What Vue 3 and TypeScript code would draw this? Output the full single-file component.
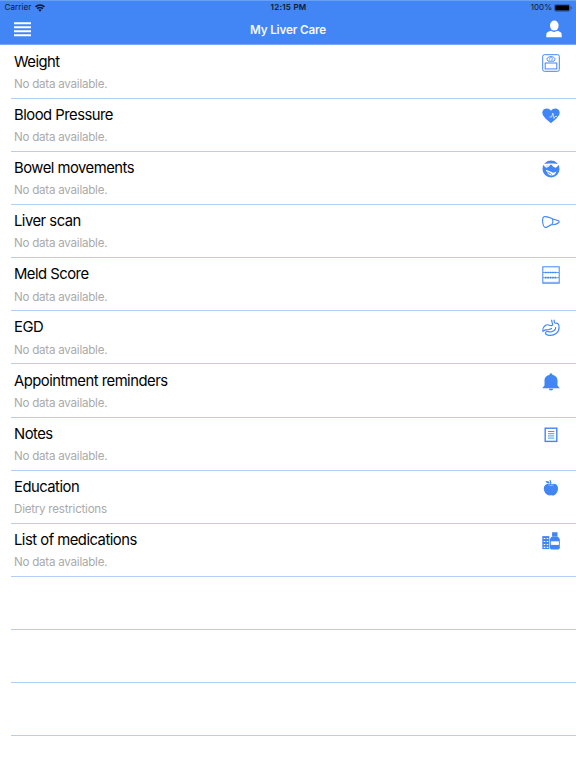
<script setup lang="ts">
interface Entry {
  title: string
  detail: string
  icon: string
}

const empty = 'No data available.'
const entries: Entry[] = [
  { title: 'Weight', detail: empty, icon: 'scale' },
  { title: 'Blood Pressure', detail: empty, icon: 'heart' },
  { title: 'Bowel movements', detail: empty, icon: 'bowel' },
  { title: 'Liver scan', detail: empty, icon: 'liver' },
  { title: 'Meld Score', detail: empty, icon: 'abacus' },
  { title: 'EGD', detail: empty, icon: 'stomach' },
  { title: 'Appointment reminders', detail: empty, icon: 'bell' },
  { title: 'Notes', detail: empty, icon: 'notes' },
  { title: 'Education', detail: 'Dietry restrictions', icon: 'apple' },
  { title: 'List of medications', detail: empty, icon: 'meds' },
]
</script>

<template>
  <div class="screen">
    <header class="top">
      <div class="status">
        <div class="carrier">
          <span>Carrier</span>
          <svg class="wifi" viewBox="0 0 10 8" fill="none" stroke="#0b1a33" stroke-width="1.6">
            <path d="M.6 2.9a6.2 6.2 0 0 1 8.8 0M2.2 4.8a4 4 0 0 1 5.6 0" />
            <path d="M5 7.7 3.4 6.1a2.3 2.3 0 0 1 3.2 0z" fill="#0b1a33" stroke="none" />
          </svg>
        </div>
        <span class="clock">12:15 PM</span>
        <div class="power">
          <span>100%</span>
          <svg class="battery" viewBox="0 0 18 8">
            <rect x=".4" y=".4" width="15.6" height="7" rx="1.6" fill="none" stroke="#244a8b" stroke-width=".6" />
            <rect x="1.2" y="1.2" width="14" height="5.4" rx=".8" fill="#000" />
            <path d="M16.9 2.8v2.3q.8-.3.8-1.15t-.8-1.15z" fill="#17366d" />
          </svg>
        </div>
      </div>
      <nav class="bar">
        <svg class="menu" viewBox="0 0 17 15" fill="#fff">
          <path d="M0 .2h17v2.1H0zM0 4.2h17v2.1H0zM0 8.2h17v2.1H0zM0 12.2h17v2.1H0z" />
        </svg>
        <h1>My Liver Care</h1>
        <svg class="user" viewBox="0 0 16 18" fill="#fff">
          <ellipse cx="8.3" cy="5.6" rx="4.3" ry="5" />
          <path d="M.3 17.2v-2.5c0-1.8 1.2-2.7 2.5-3.2l1.9-.7q3.4 2.2 6.8 0l1.8.7c1.3.5 2.4 1.4 2.4 3.2v2.5z" />
        </svg>
      </nav>
    </header>

    <main class="list">
      <section v-for="entry in entries" :key="entry.title" class="row">
        <div class="copy">
          <h2>{{ entry.title }}</h2>
          <p>{{ entry.detail }}</p>
        </div>
        <svg class="icon" viewBox="0 0 18 18" fill="none" stroke="#4285f4" stroke-width="1">
          <template v-if="entry.icon === 'scale'">
            <rect x=".7" y=".7" width="16.6" height="16.6" rx="1.8" />
            <rect x="3.2" y="9" width="11.6" height="5.9" />
            <path d="M6 7.1C3.6 4.7 6 2.7 9 2.7s5.4 2 3 4.4zM7 4.5l1.1 1M11 4.5 9.4 6M9 3v1.4" />
          </template>
          <template v-else-if="entry.icon === 'heart'">
            <path d="M9 16.3C5.4 13.3.3 9.5.3 5.6.3 1.2 6.3-.1 9 3.7 11.7-.1 17.7 1.2 17.7 5.6c0 3.9-5.1 7.7-8.7 10.7z" fill="#4285f4" stroke="none" />
            <path d="M7.4 10h2.2l1.2-4 1.2 5.5 1.1-2h2.1" stroke="#fff" stroke-width=".7" />
          </template>
          <template v-else-if="entry.icon === 'bowel'">
            <circle cx="9" cy="9" r="8.5" fill="#4285f4" stroke="none" />
            <path d="M.9 4 7.5 3.4h3L17.1 4l-1 1.2q-1 2.9-3.3 2.4Q10.6 7.1 9.7 4.8H8.3Q7.4 7.1 5.2 7.6 2.9 8.1 1.9 5.2z" fill="#fff" stroke="none" />
            <path d="M3.4 5.2q1.8.8 3.6-.1-.5 1.5-1.8 1.6-1.3 0-1.8-1.5z" fill="#4285f4" stroke="none" opacity=".3" />
            <path d="M3.9 9.7q4.2 1.4 7.3 3.1 1.7-.3 3.1-1.3-1 3.8-4.5 4.1-4.2-.1-5.9-5.9z" fill="#fff" stroke="none" />
            <path d="m4.7 11.8 3.5 1.5 1.8 1.5M8.1 13.2l-1.4 1.1" stroke-width=".7" />
          </template>
          <template v-else-if="entry.icon === 'liver'">
            <path d="M2 3.7C6 3 8.2 4.8 11 6l5.4 1.8c1.1.5.8 1.6.2 2-2.1 1.7-4.8 2.2-7 1.8-2.2.3-3.7 3.1-6.2 3C.2 13.5-.2 4.4 2 3.7zM10.5 6q1 3-.6 5.3" stroke-width="1.1" />
          </template>
          <template v-else-if="entry.icon === 'abacus'">
            <rect x=".8" y=".8" width="16.4" height="16.4" />
            <path d="M1 6.5h16M1 11.7h16" stroke-width=".8" />
            <path d="M3 6.5h12M3 11.7h12" stroke-width="1.7" stroke-dasharray="1.5 .9" />
            <path d="M1 16.3h16" stroke-width=".6" />
          </template>
          <template v-else-if="entry.icon === 'stomach'">
            <path d="M9.7.8c-.1 2.8 1 3.2.9 5.3C8.5 8.1 6.6 4.2 3.5 6.3.8 8.4.5 10.7 1 12.4l2.5-1.7c3.3 1 4.2-1.5 6.5-1.1M12.2.8c-.2 2.4.3 3.7 1.6 3.4 2.1-.5 3.3 1.5 3.3 4.2-.1 5.4-4.7 8.1-9.2 8-2.7 0-5.3-1.2-4.2-3.2 1-1.9 3.7.4 5.8-.4 2.8-.9 4.5-2 4.1-4.6" stroke-width="1.15" />
          </template>
          <template v-else-if="entry.icon === 'bell'">
            <path d="M9 .3c1.1 0 1.5.7 1.5 1.7 3.7.8 5 2.9 5 5.8v4.7l2.1 2.4v.4H.4v-.4l2.1-2.4V7.8c0-2.9 1.3-5 5-5.8C7.5 1 7.9.3 9 .3zM6.8 15.8h4.4c-.3 2.2-4.1 2.2-4.4 0z" fill="#4285f4" stroke="none" />
          </template>
          <template v-else-if="entry.icon === 'notes'">
            <rect x="3.2" y="2.2" width="11.6" height="13.2" stroke-width="1.4" />
            <path d="M6 5.5h6.3M6 7.7h6.3M6 9.9h6.3M6 12.1h6.3" stroke-width=".9" />
          </template>
          <template v-else-if="entry.icon === 'apple'">
            <path d="M9.2 5.4c2.9-1.8 7-.4 6.8 4-.1 4-2.7 7.8-6.8 6.9C4.8 17.2 1.7 13 1.8 9.2c.1-4.2 4.7-5.6 7.4-3.8zM7.7 4.2C5.6 4.6 4.1 3.7 3.5 2c2.5-.3 4 .6 4.2 2.2z" fill="#4285f4" stroke="none" />
            <path d="M8.9 6.3C9 3.8 8.5 2 8 1M9 5.3c-1.1 1-2.3.9-3.5.5" stroke-width="1.1" />
            <path d="M6.4 5.9q2.6 1.6 5.4-.1" stroke="#fff" stroke-width=".4" />
          </template>
          <template v-else>
            <path d="M.3 4.1h7v13h-7z" fill="#4285f4" stroke="none" />
            <path d="M1.7 6.5h1.6M4.7 6.5h1.6M1.7 9.5h1.6M4.7 9.5h1.6M1.7 12.5h1.6M4.7 12.5h1.6M1.7 15.3h1.6M4.7 15.3h1.6" stroke="#fff" stroke-width="1.2" />
            <path d="M10.1.2h5.4v4.4h-5.4zM9.6 4.8H16l1.8 2.1v8.8q0 1.7-1.7 1.7H9.6q-1.7 0-1.7-1.7V6.9z" fill="#4285f4" stroke="none" />
            <path d="M8.8 9.3h8.1v3.6H8.8z" fill="#fff" stroke="none" />
          </template>
        </svg>
      </section>
      <div v-for="n in 4" :key="n" class="row"></div>
    </main>
  </div>
</template>

<style>
body {
  margin: 0;
  background: #fff;
}
</style>

<style scoped>
.screen {
  height: 768px;
  overflow: hidden;
  background: #fff;
  font-family: Inter, "Liberation Sans", sans-serif;
}
.top {
  box-sizing: border-box;
  height: 45px;
  background: #4285f4;
  border-top: 1px solid #68a0f5;
  border-bottom: 1px solid #7aa9f7;
}
.status {
  display: grid;
  grid-template-columns: 1fr auto 1fr;
  align-items: center;
  height: 13px;
  padding: 0 4px 0 5px;
  font-size: 8px;
  line-height: 13px;
  color: #0b1a33;
}
.carrier,
.power {
  display: flex;
  align-items: center;
  gap: 4px;
}
.carrier {
  margin-left: -0.5px;
  letter-spacing: 0.1px;
}
.power {
  justify-content: flex-end;
  gap: 2px;
}
.wifi {
  width: 10px;
  height: 8px;
}
.battery {
  width: 18px;
  height: 8px;
}
.clock {
  font-weight: 600;
  letter-spacing: 0.25px;
}
.bar {
  display: grid;
  grid-template-columns: 1fr auto 1fr;
  align-items: center;
  height: 30px;
  padding: 0 14px;
}
.menu {
  width: 17px;
  height: 15px;
}
.user {
  justify-self: end;
  width: 16px;
  height: 18px;
}
h1 {
  margin: 0;
  padding-top: 1px;
  font-size: 11.7px;
  font-weight: 600;
  line-height: 18px;
  letter-spacing: -0.15px;
  color: #f4f8ff;
}
.list {
  margin-left: 11px;
  padding-top: 0.6px;
}
.row {
  display: flex;
  justify-content: space-between;
  box-sizing: border-box;
  height: 53.15px;
  padding: 7.1px 16px 0 3px;
  border-bottom: 1px solid #b5cef9;
}
h2 {
  margin: 0;
  font-size: 14.8px;
  font-weight: 400;
  line-height: 18px;
  letter-spacing: -0.5px;
  color: #000;
}
p {
  margin: 6.3px 0 0;
  font-size: 11.6px;
  line-height: 15px;
  letter-spacing: -0.24px;
  color: #aaa;
}
.icon {
  width: 18px;
  height: 18px;
  margin-top: 1px;
}
</style>
